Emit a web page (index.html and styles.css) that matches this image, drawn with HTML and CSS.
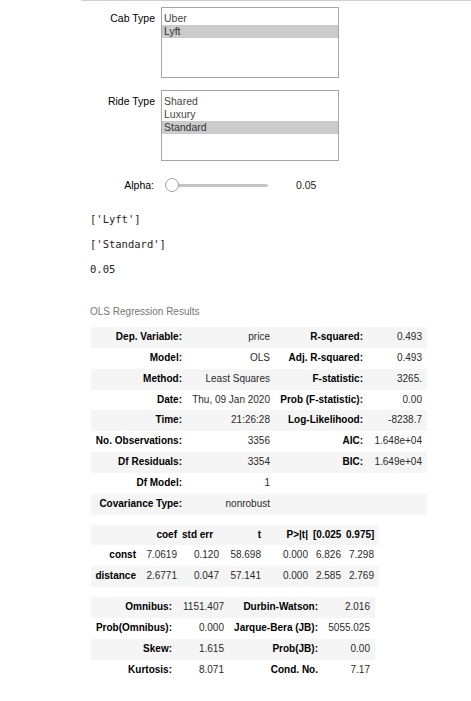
FILE: index.html
```html
<!DOCTYPE html>
<html>
<head>
<meta charset="utf-8">
<title>OLS widget</title>
<link rel="stylesheet" href="styles.css">
</head>
<body>
<div class="topline"></div>
<div class="page">
  <div class="widgets">
    <div class="wrow">
      <div class="wlabel">Cab Type</div>
      <div class="listbox">
        <div class="opt">Uber</div>
        <div class="opt selected">Lyft</div>
      </div>
    </div>
    <div class="wrow gap-top">
      <div class="wlabel">Ride Type</div>
      <div class="listbox">
        <div class="opt">Shared</div>
        <div class="opt">Luxury</div>
        <div class="opt selected">Standard</div>
      </div>
    </div>
    <div class="wrow slider-row">
      <div class="wlabel slabel">Alpha:</div>
      <div class="slider">
        <div class="track"></div>
        <div class="thumb"></div>
      </div>
      <div class="svalue">0.05</div>
    </div>
  </div>

  <div class="outputs">
    <pre class="out">['Lyft']</pre>
    <pre class="out">['Standard']</pre>
    <pre class="out">0.05</pre>
  </div>

  <div class="caption">OLS Regression Results</div>
  <table class="simpletable t1">
    <colgroup><col class="c1"><col class="c2"><col class="c3"><col class="c4"></colgroup>
    <tr><th>Dep. Variable:</th><td>price</td><th>R-squared:</th><td>0.493</td></tr>
    <tr><th>Model:</th><td>OLS</td><th>Adj. R-squared:</th><td>0.493</td></tr>
    <tr><th>Method:</th><td>Least Squares</td><th>F-statistic:</th><td>3265.</td></tr>
    <tr><th>Date:</th><td>Thu, 09 Jan 2020</td><th>Prob (F-statistic):</th><td>0.00</td></tr>
    <tr><th>Time:</th><td>21:26:28</td><th>Log-Likelihood:</th><td>-8238.7</td></tr>
    <tr><th>No. Observations:</th><td>3356</td><th>AIC:</th><td>1.648e+04</td></tr>
    <tr><th>Df Residuals:</th><td>3354</td><th>BIC:</th><td>1.649e+04</td></tr>
    <tr><th>Df Model:</th><td>1</td><th></th><td></td></tr>
    <tr><th>Covariance Type:</th><td>nonrobust</td><th></th><td></td></tr>
  </table>

  <table class="simpletable t2">
    <colgroup><col class="d0"><col class="d1"><col class="d2"><col class="d3"><col class="d4"><col class="d5"><col class="d6"></colgroup>
    <tr><th></th><th>coef</th><th><span class="stderr">std err</span></th><th>t</th><th>P&gt;|t|</th><th>[0.025</th><th>0.975]</th></tr>
    <tr><th>const</th><td>7.0619</td><td>0.120</td><td>58.698</td><td>0.000</td><td>6.826</td><td>7.298</td></tr>
    <tr><th>distance</th><td>2.6771</td><td>0.047</td><td>57.141</td><td>0.000</td><td>2.585</td><td>2.769</td></tr>
  </table>

  <table class="simpletable t3">
    <colgroup><col class="e1"><col class="e2"><col class="e3"><col class="e4"></colgroup>
    <tr><th>Omnibus:</th><td>1151.407</td><th>Durbin-Watson:</th><td>2.016</td></tr>
    <tr><th>Prob(Omnibus):</th><td>0.000</td><th>Jarque-Bera (JB):</th><td>5055.025</td></tr>
    <tr><th>Skew:</th><td>1.615</td><th>Prob(JB):</th><td>0.00</td></tr>
    <tr><th>Kurtosis:</th><td>8.071</td><th>Cond. No.</th><td>7.17</td></tr>
  </table>
</div>
</body>
</html>
```

FILE: styles.css
```css
html, body {
  margin: 0;
  padding: 0;
  background: #ffffff;
}

body {
  font-family: "Liberation Sans", Arial, sans-serif;
  color: #000;
}

.topline {
  margin-left: 81px;
  height: 0;
  border-top: 1px solid #cfcfcf;
}

.page {
  margin-left: 81px;
}

.widgets {
  padding-top: 6px;
  font-size: 10.5px;
}

.wrow {
  display: flex;
  align-items: flex-start;
}

.gap-top {
  margin-top: 12px;
}

.wlabel {
  width: 74px;
  box-sizing: border-box;
  text-align: right;
  padding-top: 5px;
  line-height: 13px;
  color: #000;
  white-space: nowrap;
}

.listbox {
  margin-left: 6px;
  width: 178px;
  height: 71px;
  box-sizing: border-box;
  border: 1px solid #a6a6a6;
  padding-top: 4px;
  background: #fff;
}

.opt {
  height: 13px;
  line-height: 13px;
  padding-left: 2px;
  color: #444;
}

.opt.selected {
  background: #cbcbcb;
  color: #333;
}

.slider-row {
  margin-top: 16px;
  height: 16px;
  align-items: center;
}

.slabel {
  padding-top: 0;
  padding-right: 1px;
  line-height: 16px;
}

.slider {
  margin-left: 10px;
  width: 103px;
  height: 16px;
  position: relative;
  display: flex;
  align-items: center;
}

.track {
  flex: 1;
  height: 3px;
  background: #c4c4c4;
  border-radius: 2px;
}

.thumb {
  position: absolute;
  left: 0;
  top: 1px;
  width: 12px;
  height: 12px;
  border: 1px solid #a0a0a0;
  border-radius: 50%;
  background: #fff;
}

.svalue {
  margin-left: 28px;
  line-height: 16px;
  color: #222;
}

.outputs {
  margin-top: 14px;
  margin-left: 9px;
}

.out {
  margin: 0;
  font-family: "DejaVu Sans Mono", "Liberation Mono", monospace;
  font-size: 10.5px;
  line-height: 25px;
  height: 25px;
  color: #222;
}

.caption {
  margin-top: 24px;
  margin-left: 9px;
  font-size: 10px;
  line-height: 12px;
  color: #777;
}

.simpletable {
  margin-left: 10px;
  border-collapse: collapse;
  border-spacing: 0;
  table-layout: fixed;
  font-size: 10px;
}

.simpletable th,
.simpletable td {
  padding: 5px 5px 5px 0;
  line-height: 10.85px;
  text-align: right;
  white-space: nowrap;
  vertical-align: middle;
}

.simpletable th {
  font-weight: bold;
  color: #000;
}

.simpletable td {
  font-weight: normal;
  color: #2a2a2a;
}

.simpletable tr:nth-child(odd) {
  background: #f5f5f5;
}

.t1 {
  margin-top: 9px;
  width: 336px;
}

.c1 { width: 96px; }
.c2 { width: 88px; }
.c3 { width: 93px; }
.c4 { width: 59px; }

.t2 {
  margin-top: 10px;
  width: 288px;
}

.d0 { width: 50px; }
.d1 { width: 41px; }
.d2 { width: 42px; }
.d3 { width: 42px; }
.d4 { width: 47px; }
.d5 { width: 33px; }
.d6 { width: 33px; }

.stderr {
  margin-right: 6px;
}

.t3 {
  margin-top: 10px;
  width: 284px;
}

.e1 { width: 86px; }
.e2 { width: 52px; }
.e3 { width: 94px; }
.e4 { width: 52px; }
```
